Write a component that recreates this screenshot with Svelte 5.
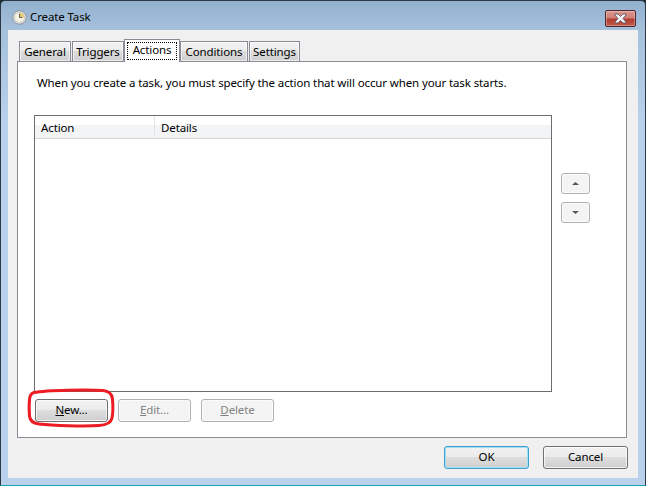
<script>
  const tabs = [
    { label: 'General', w: 52 },
    { label: 'Triggers', w: 52 },
    { label: 'Actions', w: 56, active: true },
    { label: 'Conditions', w: 68 },
    { label: 'Settings', w: 51 }
  ];
</script>

<div class="window">
  <header class="titlebar">
    <svg class="clock" width="15" height="15" viewBox="0 0 16 16">
      <circle cx="8" cy="8" r="7.2" fill="#e4e6e6" stroke="#8d9296" />
      <circle cx="8" cy="8" r="5.4" fill="#f7f3e2" stroke="#b4b7b8" stroke-width="0.7" />
      <path d="M8 8V3.200A4.800 4.800 0 0 1 12.600 8Z" fill="#e6c667" />
      <path d="M8 4v4h3" fill="none" stroke="#55595c" stroke-width="1" />
    </svg>
    <span class="title">Create Task</span>
    <button class="close" aria-label="Close">
      <svg width="17" height="11" viewBox="0 0 17 11">
        <path d="M3 1h3l2.500 2.500L11 1h3v1L11 5.500 14 9v1h-3L8.500 7.500 6 10H3V9l3-3.500L3 2Z" fill="#f2f3f6" stroke="#4d4f5c" stroke-width="0.8" />
      </svg>
    </button>
  </header>

  <main class="client">
    <nav class="tabs">
      {#each tabs as tab}
        <div class="tab" class:active={tab.active} style="width: {tab.w}px">
          <span class="tab-label">{tab.label}</span>
        </div>
      {/each}
    </nav>

    <section class="panel">
      <p class="intro">When you create a task, you must specify the action that will occur when your task starts.</p>

      <div class="list-row">
        <div class="list">
          <div class="list-head">
            <div class="col col-action">Action</div>
            <div class="col">Details</div>
          </div>
        </div>
        <div class="movers">
          <button class="btn mover" aria-label="Move up">
            <svg width="7" height="3" viewBox="0 0 7 3"><path d="M3.500 0L7 3H0Z" fill="#555" /></svg>
          </button>
          <button class="btn mover" aria-label="Move down">
            <svg width="7" height="3" viewBox="0 0 7 3"><path d="M0 0h7L3.500 3Z" fill="#555" /></svg>
          </button>
        </div>
      </div>

      <div class="actions">
        <button class="btn act new">
          <u>N</u>ew...
          <svg class="ring" width="88" height="40" viewBox="0 0 88 40">
            <path d="M7 4.500C20 2 62 1.500 76 2.500 82 3 85 6 85.500 11 86 17 86 25 85 30 84 35 80 37 72 37.500 56 38.500 26 37.500 12 36 6 35.300 3 33 2.500 28 2 22 2 15 2.700 10 3.200 7 4.500 5.200 7 4.500Z" fill="none" stroke="#ed1c24" stroke-width="3" />
          </svg>
        </button>
        <button class="btn act disabled"><u>E</u>dit...</button>
        <button class="btn act disabled"><u>D</u>elete</button>
      </div>
    </section>

    <footer class="footer">
      <button class="btn dlg default">OK</button>
      <button class="btn dlg">Cancel</button>
    </footer>
  </main>
</div>

<style>
  :global(body) {
    margin: 0;
    background: #1f2a33;
  }
  .window {
    width: 646px;
    height: 486px;
    box-sizing: border-box;
    border: 1px solid #2b3944;
    border-bottom-color: #12a5b8;
    border-radius: 5px 5px 0 0;
    background: linear-gradient(180deg, #92b0cf 0, #a6c1dc 30px, #b9d1ea 120px);
    padding: 0 7px 7px;
    display: flex;
    flex-direction: column;
    font-family: "Noto Sans", "Open Sans", sans-serif;
    font-size: 11.5px;
    letter-spacing: -0.12px;
    color: #000;
  }
  .titlebar {
    height: 29px;
    flex: none;
    display: flex;
    align-items: center;
    padding: 0 0 0 4px;
    gap: 3px;
  }
  .clock {
    flex: none;
    margin-top: 3px;
  }
  .title {
    margin-top: 2px;
  }
  .close {
    margin-left: auto;
    margin-right: 2px;
    margin-top: 5px;
    width: 31px;
    height: 17px;
    padding: 0;
    border: 1px solid #50262a;
    border-radius: 2px;
    background: linear-gradient(180deg, #dc968e 0, #cf7f76 45%, #b23c2e 55%, #c25a4c 100%);
    box-shadow: inset 0 0 0 1px rgba(255, 255, 255, 0.3);
    display: flex;
    align-items: center;
    justify-content: center;
  }
  .client {
    flex: 1;
    background: #f0f0f0;
    padding: 9px 11px 9px 9px;
    display: flex;
    flex-direction: column;
  }
  .tabs {
    display: flex;
    height: 22px;
    padding-left: 2px;
    gap: 1px;
    align-items: flex-end;
    position: relative;
    z-index: 1;
  }
  .tab {
    height: 20px;
    box-sizing: border-box;
    border: 1px solid #898c95;
    border-bottom: none;
    background: linear-gradient(180deg, #f2f2f2 0, #ebebeb 45%, #dcdcdc 50%, #cfcfcf 100%);
    text-align: center;
    line-height: 20px;
    white-space: nowrap;
    box-shadow: inset 0 0 0 1px rgba(255, 255, 255, 0.6);
  }
  .tab.active {
    height: 23px;
    margin: 0 -1px -1px;
    background: #fff;
    box-shadow: none;
    line-height: 16px;
    padding: 2px 2px 0;
  }
  .tab.active .tab-label {
    display: block;
    outline: 1px dotted #000;
    outline-offset: -1px;
    height: 18px;
  }
  .panel {
    width: 610px;
    height: 377px;
    box-sizing: border-box;
    flex: none;
    background: #fff;
    border: 1px solid #898c95;
    padding: 0 0 0 16px;
    display: flex;
    flex-direction: column;
  }
  .intro {
    margin: 12px 0 0 3px;
    line-height: 17px;
    white-space: nowrap;
  }
  .list-row {
    display: flex;
    margin-top: 24px;
    flex: none;
  }
  .list {
    width: 518px;
    height: 277px;
    box-sizing: border-box;
    border: 1px solid #6d6d6d;
    flex: none;
  }
  .list-head {
    height: 22px;
    display: flex;
    border-bottom: 1px solid #d5d5d5;
    background: linear-gradient(180deg, #fff 0, #fff 40%, #f3f4f6 42%, #f3f4f6 100%);
    line-height: 24px;
  }
  .col {
    padding-left: 6px;
  }
  .col-action {
    width: 113px;
    border-right: 1px solid #e3e5e7;
  }
  .movers {
    display: flex;
    flex-direction: column;
    gap: 8px;
    margin: 58px 0 0 9px;
  }
  .btn {
    font: inherit;
    letter-spacing: inherit;
    color: #000;
    padding: 0 0 1px;
    box-sizing: border-box;
    border: 1px solid #707070;
    border-radius: 3px;
    background: linear-gradient(180deg, #f2f2f2 0, #ebebeb 45%, #dddddd 50%, #cfcfcf 100%);
    box-shadow: inset 0 0 0 1px rgba(255, 255, 255, 0.7);
    line-height: 1;
  }
  .mover {
    width: 29px;
    height: 21px;
    padding: 0;
    background: #f4f4f4;
    border-color: #adb2b5;
    display: flex;
    align-items: center;
    justify-content: center;
  }
  .actions {
    display: flex;
    gap: 10px;
    margin: 7px 0 0 1px;
  }
  .act {
    width: 73px;
    height: 23px;
  }
  .disabled {
    background: #f4f4f4;
    border-color: #adb2b5;
    color: #838383;
  }
  .new {
    position: relative;
  }
  .ring {
    position: absolute;
    left: -9px;
    top: -12px;
    pointer-events: none;
  }
  .footer {
    display: flex;
    justify-content: flex-end;
    gap: 14px;
    margin-top: 8px;
    margin-right: -1px;
  }
  .dlg {
    width: 85px;
    height: 23px;
  }
  .default {
    border-color: #3c9fd0;
    box-shadow: inset 0 0 0 1px #9fe0f7;
  }
</style>
